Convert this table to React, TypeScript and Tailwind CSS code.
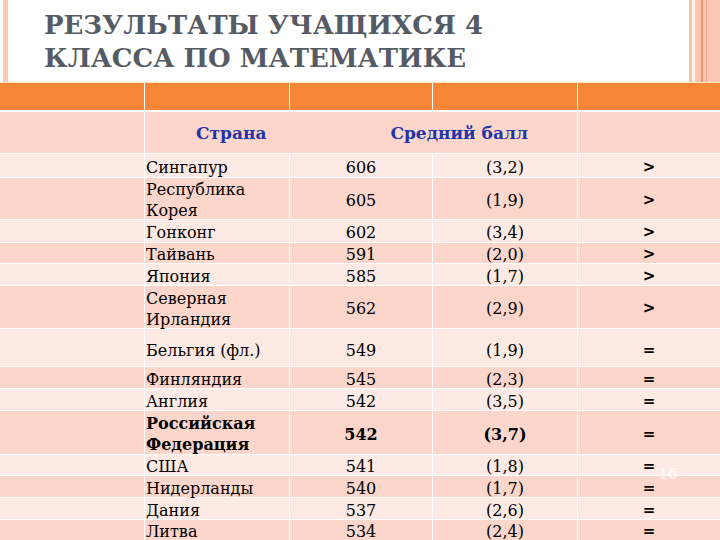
import React from "react";

type Row = {
  h: string;
  country: React.ReactNode;
  score: string;
  se: string;
  sign: string;
  dark: boolean;
  bold?: boolean;
  pad?: string;
};

const rows: Row[] = [
  { h: "h-[23px]", country: "Сингапур", score: "606", se: "(3,2)", sign: ">", dark: false },
  { h: "h-[41px]", country: <>Республика<br />Корея</>, score: "605", se: "(1,9)", sign: ">", dark: true },
  { h: "h-[22px]", country: "Гонконг", score: "602", se: "(3,4)", sign: ">", dark: false },
  { h: "h-[20px]", country: "Тайвань", score: "591", se: "(2,0)", sign: ">", dark: true },
  { h: "h-[21px]", country: "Япония", score: "585", se: "(1,7)", sign: ">", dark: false },
  { h: "h-[42px]", country: <>Северная<br />Ирландия</>, score: "562", se: "(2,9)", sign: ">", dark: true },
  { h: "h-[37px]", country: "Бельгия (фл.)", score: "549", se: "(1,9)", sign: "=", dark: false, pad: "pt-[11px]" },
  { h: "h-[21px]", country: "Финляндия", score: "545", se: "(2,3)", sign: "=", dark: true },
  { h: "h-[21px]", country: "Англия", score: "542", se: "(3,5)", sign: "=", dark: false },
  { h: "h-[43px]", country: <>Российская<br />Федерация</>, score: "542", se: "(3,7)", sign: "=", dark: true, bold: true },
  { h: "h-[20px]", country: "США", score: "541", se: "(1,8)", sign: "=", dark: false },
  { h: "h-[21px]", country: "Нидерланды", score: "540", se: "(1,7)", sign: "=", dark: true },
  { h: "h-[21px]", country: "Дания", score: "537", se: "(2,6)", sign: "=", dark: false },
  { h: "h-[20px]", country: "Литва", score: "534", se: "(2,4)", sign: "=", dark: true },
];

const serif =
  "font-['DejaVu_Serif','Noto_Serif','Tinos','FreeSerif','DejaVu_Sans',sans-serif]";

export default function App() {
  return (
    <div className="relative w-[720px] h-[540px] overflow-hidden bg-white">
      {/* Title area */}
      <div className="flex h-[82px]">
        <div className="ml-[3px] w-[5px] bg-[#f8c9b6]" />
        <div className="flex-1 pl-[36px] pt-[9px]">
          <h1 className={`${serif} font-bold text-[26px] leading-[33px] text-[#555b64]`}>
            РЕЗУЛЬТАТЫ УЧАЩИХСЯ 4
            <br />
            КЛАССА ПО МАТЕМАТИКЕ
          </h1>
        </div>
        <div className="flex w-[31px]">
          <div className="w-[3px] bg-[#f6c2ad]" />
          <div className="w-[3px] bg-[#fff3ea]" />
          <div className="w-[6px] bg-[#fac6b2]" />
          <div className="w-[2px] bg-[#e9996f]" />
          <div className="w-[3px] bg-[#fac6b2]" />
          <div className="w-px bg-[#efad8c]" />
          <div className="flex-1 bg-[#fcc8b4]" />
        </div>
      </div>

      {/* Table */}
      <div className="border-t border-[#fde3b8]">
        <div className="grid grid-cols-[144px_144px_142px_144px_1fr] gap-px bg-white">
          <div className="h-[27px] bg-[#fa8637]" />
          <div className="h-[27px] bg-[#fa8637]" />
          <div className="h-[27px] bg-[#fa8637]" />
          <div className="h-[27px] bg-[#fa8637]" />
          <div className="h-[27px] bg-[#fa8637]" />
          <div className="mt-px h-[41px] bg-[#fcd6cb]" />
          <div
            className={`col-span-3 mt-px h-[41px] bg-[#fcd6cb] flex items-center pt-[2px] ${serif} font-bold text-[17px] text-[#2234a8]`}
          >
            <span className="ml-[51px]">Страна</span>
            <span className="ml-[124px]">Средний балл</span>
          </div>
          <div className="mt-px h-[41px] bg-[#fcd6cb]" />
          {rows.map((r, i) => {
            const bg = r.dark ? "bg-[#fcd6cb]" : "bg-[#fdeae4]";
            const va = r.pad ? "items-start " + r.pad : "items-center pt-[3px]";
            const base = `${r.h} ${bg} flex ${va} ${serif} text-[16px] leading-[21px] text-black`;
            return (
              <React.Fragment key={i}>
                <div className={`${r.h} ${bg}`} />
                <div className={`${base} pl-px ${r.bold ? "font-bold" : ""}`}>
                  <span>{r.country}</span>
                </div>
                <div className={`${base} justify-center ${r.bold ? "font-bold" : ""}`}>
                  <span>{r.score}</span>
                </div>
                <div className={`${base} justify-center ${r.bold ? "font-bold" : ""}`}>
                  <span>{r.se}</span>
                </div>
                <div
                  className={`${r.h} ${bg} flex ${va} justify-center font-['DejaVu_Sans',sans-serif] font-bold text-[15px] leading-[21px] text-black`}
                >
                  <span>{r.sign}</span>
                </div>
              </React.Fragment>
            );
          })}
        </div>
      </div>

      <div className={`absolute left-[658px] top-[464px] ${serif} font-bold text-[14px] text-white/70`}>
        16
      </div>
    </div>
  );
}
